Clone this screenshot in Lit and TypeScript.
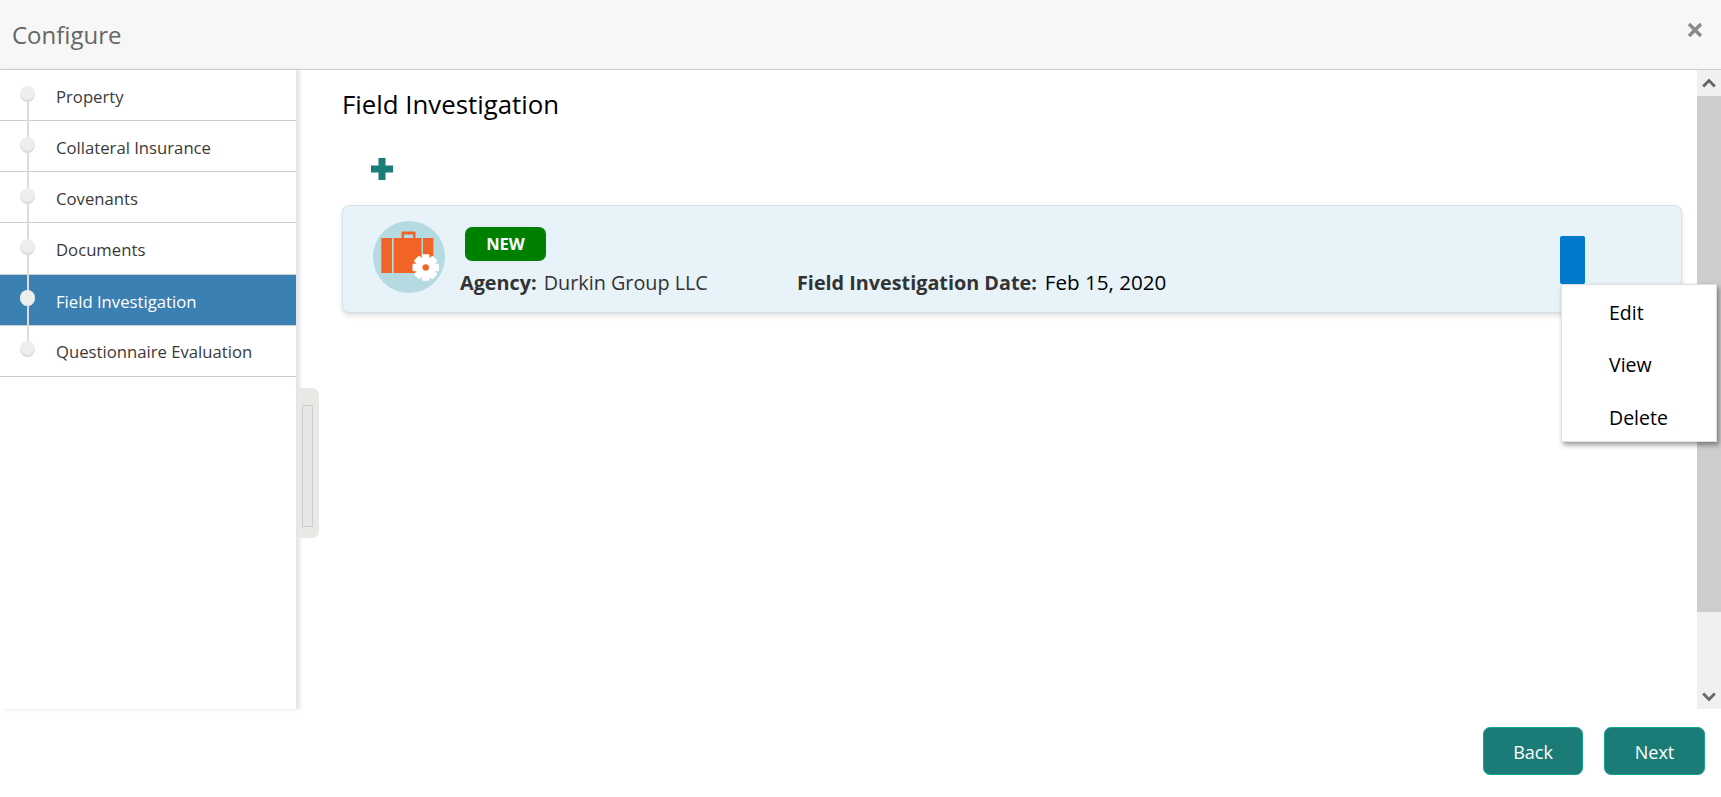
import { LitElement, html, css, svg } from "lit";
import { customElement } from "lit/decorators.js";

const STEPS = ["Property", "Collateral Insurance", "Covenants", "Documents", "Field Investigation", "Questionnaire Evaluation"];
const ACTIVE = 4;
const TEETH = [0, 45, 90, 135];

@customElement("app-root")
export class AppRoot extends LitElement {
  static styles = css`
    :host { display: block; width: 1721px; height: 797px; overflow: hidden; background: #fff; font-family: "Open Sans", "Noto Sans", sans-serif; color: #333; }
    .page { display: flex; flex-direction: column; height: 797px; }
    .header { height: 70px; box-sizing: border-box; flex: none; background: #f7f7f7; border-bottom: 1px solid #cccccc; display: flex; align-items: center; justify-content: space-between; padding: 0 18px 0 12px; }
    .title { font-size: 24px; color: #666; }
    .close { display: block; width: 16px; height: 16px; margin-top: -9px; }
    .body { flex: none; height: 639px; display: flex; position: relative; }
    .side { width: 296px; flex: none; box-sizing: content-box; border-right: 1px solid #dfe5ec; box-shadow: 3px 0 4px rgba(190,198,208,.45); }
    .steps { position: relative; }
    .steps::after { content: ""; position: absolute; left: 27px; top: 24px; width: 2px; height: 250px; background: #dcdcdc; z-index: 1; }
    .step { height: 51.17px; box-sizing: border-box; border-bottom: 1px solid #cfcfca; display: flex; align-items: center; padding-left: 20px; gap: 21px; font-size: 16.7px; color: #3a3a3a; }
    .step span:last-child { padding-top: 2px; }
    .step.on { background: #3b80b3; color: #fff; }
    .step.on span:last-child { padding-top: 4px; }
    .dot { position: relative; z-index: 2; width: 15px; height: 16px; border-radius: 50%; background: #eeeeee; box-shadow: inset 0 -2px 1px #dcdcdc; margin-bottom: 3px; }
    .step.on .dot { box-shadow: inset 0 -1px 1px #e0e0e0; }
    .handle { position: absolute; left: 297px; top: 318px; width: 22px; height: 150px; box-sizing: border-box; background: #e8e8e5; border-radius: 0 7px 7px 0; padding: 17px 6px 11px 5px; }
    .handle i { display: block; height: 100%; box-sizing: border-box; border: 1px solid #cdcdcd; background: #e6e6e4; }
    .main { flex: 1; min-width: 0; padding: 0 15px 0 45px; }
    h1 { margin: 0; font-weight: 400; font-size: 25.8px; color: #000; height: 66px; padding-top: 17px; box-sizing: border-box; line-height: 34px; white-space: nowrap; }
    .add { display: block; height: 22px; margin: 22px 0 25px 29px; width: 22px; }
    .card { position: relative; height: 108px; box-sizing: border-box; background: #e7f2f9; border: 1px solid #d2e0ec; border-radius: 7px; box-shadow: 0 3px 5px rgba(0,0,0,.12); display: flex; align-items: center; padding-left: 30px; }
    .avatar { display: block; width: 72px; height: 72px; flex: none; margin-top: -4px; }
    .info { margin-left: 15px; display: flex; flex-direction: column; gap: 8px; padding-top: 5px; }
    .badge { width: 81px; height: 34px; margin-left: 5px; background: #008000; color: #fff; border-radius: 7px; font-size: 16.5px; font-weight: 700; display: flex; align-items: center; justify-content: center; }
    .line { display: flex; font-size: 19.8px; line-height: 28px; color: #333; white-space: nowrap; }
    .agency { width: 337px; }
    .agency b { margin-right: 2px; }
    b { font-weight: 700; }
    .date { color: #000; margin-left: 8px; font-weight: 500; font-size: 20.6px; margin-top: -1px; }
    .kebab { position: relative; margin-left: auto; margin-right: 96px; width: 25px; height: 48px; flex: none; background: #007acc; border-radius: 2px; margin-top: 1px; }
    .menu { position: absolute; z-index: 5; left: 1px; top: 48px; width: 156px; height: 158px; box-sizing: border-box; padding-top: 2px; background: #fff; border: 1px solid #e0e0e0; box-shadow: 2px 3px 5px rgba(0,0,0,.4); color: #000; font-size: 19.5px; display: flex; flex-direction: column; }
    .menu div { flex: none; height: 52.5px; line-height: 52.5px; padding-left: 47px; }
    .bar { width: 24px; flex: none; display: flex; flex-direction: column; background: #f0f0f0; }
    .arrow { height: 26px; flex: none; display: flex; align-items: center; justify-content: center; }
    .thumb { height: 516px; flex: none; background: #cdcdcd; }
    .track { flex: 1; }
    .foot { flex: 1; display: flex; justify-content: flex-end; gap: 21px; padding: 18px 16px 0 0; box-sizing: border-box; }
    .btn { width: 100px; height: 48px; box-sizing: border-box; background: #1b7c77; border: 1px solid #13a595; border-radius: 7px; color: #fff; font-size: 18px; display: flex; align-items: center; justify-content: center; padding-top: 2px; }
    .btn.next { width: 101px; }
    .down { padding-top: 2px; box-sizing: border-box; }
  `;

  render() {
    return html`<div class="page">
      <div class="header">
        <span class="title">Configure</span>
        <svg class="close" viewBox="0 0 16 16"><path d="M2 2 14 14M14 2 2 14" stroke="#8a8a8a" stroke-width="3.4" fill="none"/></svg>
      </div>
      <div class="body">
        <div class="side">
          <div class="steps">
            ${STEPS.map((s, i) => html`<div class="step ${i === ACTIVE ? "on" : ""}"><span class="dot"></span><span>${s}</span></div>`)}
          </div>
        </div>
        <div class="handle"><i></i></div>
        <div class="main">
          <h1>Field Investigation</h1>
          <svg class="add" viewBox="0 0 22 22"><path d="M7.5 0h7v7.5H22v7h-7.5V22h-7v-7.5H0v-7h7.5z" fill="#1a7d78"/></svg>
          <div class="card">
            <svg class="avatar" viewBox="0 0 72 72">
              <circle cx="36" cy="36" r="36" fill="#b5dae2"/>
              <path d="M28.5 17v-5.5a1 1 0 0 1 1-1h12a1 1 0 0 1 1 1V17h-2.5v-3.6h-9V17z" fill="#f26425"/>
              <rect x="8.3" y="17" width="10.7" height="35" fill="#f26425"/>
              <rect x="20.6" y="17" width="28" height="35" fill="#f26425"/>
              <rect x="50" y="17" width="10.4" height="35" fill="#f26425"/>
              ${TEETH.map((a) => svg`<rect x="48.9" y="33.3" width="7.6" height="26.4" rx="1.2" fill="#fff" transform="rotate(${a} 52.7 46.5)"/>`)}
              <circle cx="52.7" cy="46.5" r="10" fill="#fff"/>
              <circle cx="52.7" cy="46.5" r="3.2" fill="#f26425"/>
            </svg>
            <div class="info">
              <div class="badge">NEW</div>
              <div class="line">
                <span class="agency"><b>Agency:</b> Durkin Group LLC</span>
                <span><b>Field Investigation Date:</b></span>
                <span class="date">Feb 15, 2020</span>
              </div>
            </div>
            <div class="kebab">
              <div class="menu"><div>Edit</div><div>View</div><div>Delete</div></div>
            </div>
          </div>
        </div>
        <div class="bar">
          <div class="arrow"><svg width="14" height="10" viewBox="0 0 14 10"><path d="M1.2 8.5 7 2.5l5.8 6" fill="none" stroke="#666" stroke-width="2.8"/></svg></div>
          <div class="thumb"></div>
          <div class="track"></div>
          <div class="arrow down"><svg width="14" height="10" viewBox="0 0 14 10"><path d="M1.2 1.5 7 7.5l5.8-6" fill="none" stroke="#666" stroke-width="2.8"/></svg></div>
        </div>
      </div>
      <div class="foot">
        <div class="btn">Back</div>
        <div class="btn next">Next</div>
      </div>
    </div>`;
  }
}
